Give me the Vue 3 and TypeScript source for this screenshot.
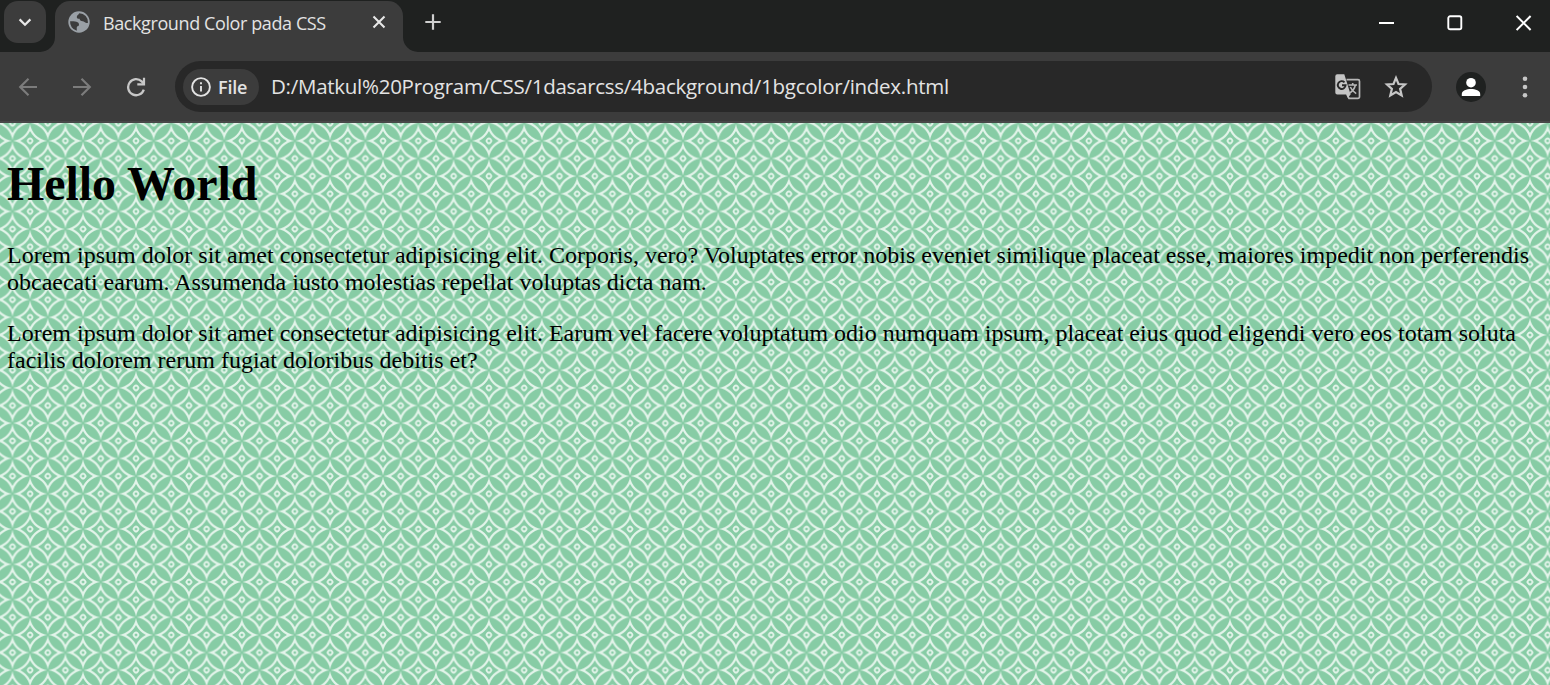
<script setup lang="ts">
const tabTitle = 'Background Color pada CSS'
const url = 'D:/Matkul%20Program/CSS/1dasarcss/4background/1bgcolor/index.html'
const paragraphs: string[][] = [
  [
    'Lorem ipsum dolor sit amet consectetur adipisicing elit. Corporis, vero? Voluptates error nobis eveniet similique placeat esse, maiores impedit non perferendis',
    'obcaecati earum. Assumenda iusto molestias repellat voluptas dicta nam.',
  ],
  [
    'Lorem ipsum dolor sit amet consectetur adipisicing elit. Earum vel facere voluptatum odio numquam ipsum, placeat eius quod eligendi vero eos totam soluta',
    'facilis dolorem rerum fugiat doloribus debitis et?',
  ],
]

// Centres of the concave diamonds in one tile: four corners and the middle.
const tile = 35.29
const centres: [number, number][] = [
  [0, 0], [tile, 0], [0, tile], [tile, tile], [tile / 2, tile / 2],
]

// Four-pointed star whose sides are arcs bending towards the centre.
function star(tip: number, radius: number): string {
  const arc = `A${radius} ${radius} 0 0 0`
  return `M0 ${-tip}${arc} ${tip} 0${arc} 0 ${tip}${arc} ${-tip} 0${arc} 0 ${-tip}Z`
}
const outerStar = star(17, 20.3)
const innerStar = star(9.8, 22.6)
</script>

<template>
  <div class="browser">
    <header class="tabstrip">
      <div class="search-well">
        <button class="tab-search" aria-label="Search tabs">
          <svg width="42" height="42" viewBox="0 0 42 42"><path d="M15.6 18.4 21 23.8 26.4 18.4" fill="none" stroke="#e8e8e8" stroke-width="2.2" /></svg>
        </button>
      </div>
      <div class="tab-well">
        <div class="tab">
          <svg class="globe" width="22" height="22" viewBox="0 0 22 22">
            <circle cx="11" cy="11" r="10.7" fill="#9aa0a6" />
            <path d="M11.3 2.2C10.2 4 8.7 4.4 8.8 6.2c.1 1.3 1.3 1.6 2.8 1.5.3 1.4.7 2 2 2.2 1.6.2 2.7.8 3.6 1.6.9.7 1.8.4 2.8.2A9 9 0 0 0 11.3 2.2Z" fill="#3c3c3c" />
            <path d="M2.1 10.3c2.1.1 4.7 0 6.3.4 1.7.4 2.7 1.5 2.6 3-.1 1.3-1 1.5-1.9 1.8-.6.9-.2 2.4-.3 4.3A9 9 0 0 1 2.1 10.3Z" fill="#3c3c3c" />
          </svg>
          <span class="tab-title">{{ tabTitle }}</span>
          <svg class="tab-close" width="14" height="14" viewBox="0 0 14 14"><path d="M1.5 1.5 12.5 12.5M12.5 1.5 1.5 12.5" stroke="#e8e8e8" stroke-width="2.1" /></svg>
        </div>
      </div>
      <div class="strip-rest">
        <svg class="plus" width="16" height="16" viewBox="0 0 16 16"><path d="M8 .3V15.7M.3 8H15.7" stroke="#cfcfcf" stroke-width="2.2" /></svg>
        <div class="window-controls">
          <svg width="16" height="16" viewBox="0 0 16 16"><path d="M1 8H16" stroke="#fff" stroke-width="2" /></svg>
          <svg width="16" height="16" viewBox="0 0 16 16"><rect x="1.3" y="1.3" width="13" height="13" rx="1.8" fill="none" stroke="#fff" stroke-width="1.9" /></svg>
          <svg width="16" height="16" viewBox="0 0 16 16"><path d="M.6 1 14.6 15M14.6 1 .6 15" stroke="#fff" stroke-width="2" /></svg>
        </div>
      </div>
    </header>

    <nav class="toolbar">
      <svg class="nav-icon" width="20" height="20" viewBox="0 0 20 20"><path d="M19 10H2.5M10.5 1.7 2.2 10 10.5 18.3" fill="none" stroke="#7c7c7c" stroke-width="2.2" /></svg>
      <svg class="nav-icon" width="20" height="20" viewBox="0 0 20 20"><path d="M1 10H17.5M9.5 1.7 17.8 10 9.5 18.3" fill="none" stroke="#7c7c7c" stroke-width="2.2" /></svg>
      <svg class="nav-icon" width="20" height="20" viewBox="0 0 20 20">
        <path d="M17.8 12.6A8 8 0 1 1 15.7 4.4L17.8 6.6" fill="none" stroke="#c7c7c7" stroke-width="2.3" />
        <path d="M18 .8V7.3H11.3" fill="none" stroke="#c7c7c7" stroke-width="2.2" />
      </svg>
      <div class="omnibox">
        <div class="chip">
          <svg width="20" height="20" viewBox="0 0 20 20">
            <circle cx="10" cy="10" r="8.9" fill="none" stroke="#e3e3e3" stroke-width="1.9" />
            <path d="M10 9V14.5M10 5.3V7.3" stroke="#e3e3e3" stroke-width="1.9" />
          </svg>
          <span>File</span>
        </div>
        <span class="url">{{ url }}</span>
        <svg class="translate" width="26" height="26" viewBox="0 0 26 26">
          <path d="M11.5 5.7H23a1.5 1.5 0 0 1 1.5 1.5V22.8a1.5 1.5 0 0 1-1.5 1.5H14L11.8 20" fill="none" stroke="#b8b8b8" stroke-width="1.7" />
          <path d="M2.3 .3H9.3L15.6 20.4 12.8 23.8 11.6 20.4H2.3A2 2 0 0 1 .3 18.4V2.3a2 2 0 0 1 2-2Z" fill="#c4c4c4" />
          <path d="M9.5 8.3A3.9 3.9 0 1 0 10.6 11.3H7" fill="none" stroke="#282828" stroke-width="1.9" />
          <path d="M13.5 11H22M17.7 9V11M20.4 11C19.6 14.4 17.7 17.1 14.8 19M15.3 13C16.4 15.5 18.2 17.8 21.2 19.6" fill="none" stroke="#b8b8b8" stroke-width="1.6" />
        </svg>
        <svg class="star" width="24" height="24" viewBox="0 0 24 24"><path d="M12 2.9 14.5 9 21 9.5 16.1 13.8 17.7 20.5 12 17 6.3 20.5 7.9 13.8 3 9.5 9.5 9Z" fill="none" stroke="#c7c7c7" stroke-width="2.2" /></svg>
      </div>
      <svg class="avatar" width="30" height="30" viewBox="0 0 30 30">
        <circle cx="15" cy="15" r="15" fill="#1f2120" />
        <circle cx="15" cy="10.7" r="4.8" fill="#fff" />
        <path d="M5.8 24V22C5.8 18.8 10.5 17 15 17S24.2 18.8 24.2 22V24Z" fill="#fff" />
      </svg>
      <svg class="menu" width="6" height="22" viewBox="0 0 6 22">
        <g fill="#c7c7c7"><circle cx="3" cy="2.7" r="2.3" /><circle cx="3" cy="11" r="2.3" /><circle cx="3" cy="19.3" r="2.3" /></g>
      </svg>
    </nav>

    <main class="page">
      <svg class="backdrop" width="1550" height="562">
        <defs>
          <pattern id="kawung" x="12.5" y="35.5" :width="tile" :height="tile" patternUnits="userSpaceOnUse">
            <g v-for="([x, y], i) in centres" :key="i" :transform="`translate(${x} ${y})`">
              <path :d="outerStar" fill="#e3f4ea" />
              <path :d="innerStar" fill="#87cca5" />
              <rect x="-2.2" y="-2.2" width="4.4" height="4.4" rx="1.6" transform="rotate(45)" fill="#87cca5" stroke="#e3f4ea" stroke-width="1.8" />
            </g>
          </pattern>
        </defs>
        <rect width="1550" height="562" fill="#87cca5" />
        <rect width="1550" height="562" fill="url(#kawung)" />
      </svg>
      <article class="content">
        <h1>Hello World</h1>
        <p v-for="(lines, i) in paragraphs" :key="i">
          <span v-for="(line, j) in lines" :key="j" class="line">{{ line }}</span>
        </p>
      </article>
    </main>
  </div>
</template>

<style>
body { margin: 0; overflow: hidden; }
</style>

<style scoped>
.browser { width: 1550px; height: 685px; overflow: hidden; display: flex; flex-direction: column; font-family: "Open Sans", "Noto Sans", sans-serif; background: #1f2120; }
.tabstrip { height: 52px; display: flex; background: #3c3c3c; flex: none; }
.search-well { width: 55px; box-sizing: border-box; padding: 1px 0 0 4px; background: #1f2120; border-bottom-right-radius: 15px; }
.tab-search { display: block; width: 42px; height: 42px; padding: 0; border: 0; border-radius: 14px; background: #3c3c3c; }
.tab-search svg { display: block; }
.tab-well { width: 348px; box-sizing: border-box; padding-top: 1px; background: linear-gradient(#1f2120 50%, #3c3c3c 50%); }
.tab { height: 51px; box-sizing: border-box; display: flex; align-items: flex-start; padding: 10px 17px 0 13px; background: #3c3c3c; border-radius: 15px 15px 0 0; }
.globe { flex: none; }
.tab-title { margin-left: 13px; font-size: 18px; line-height: 24px; color: #e3e3e3; white-space: nowrap; letter-spacing: -0.4px; flex: 1; }
.tab-close { margin-top: 4px; flex: none; }
.strip-rest { flex: 1; display: flex; justify-content: space-between; background: #1f2120; border-bottom-left-radius: 15px; padding: 14px 18px 0 22px; }
.window-controls { display: flex; gap: 53px; padding-top: 1px; }
.toolbar { height: 69px; flex: none; display: flex; align-items: center; background: #3c3c3c; border-bottom: 2px solid #484848; padding-left: 18px; }
.nav-icon { flex: none; margin-right: 34px; }
.nav-icon:nth-child(3) { margin-right: 29px; }
.omnibox { width: 1257px; height: 51px; box-sizing: border-box; border-radius: 26px; background: #282828; display: flex; align-items: center; padding: 0 24px 0 8px; flex: none; }
.chip { width: 76px; height: 36px; box-sizing: border-box; padding-left: 7.5px; border-radius: 18px; background: #3c3c3c; display: flex; align-items: center; gap: 7.5px; color: #e3e3e3; font-size: 18px; font-weight: 600; letter-spacing: -0.2px; flex: none; }
.url { margin-left: 12px; padding-bottom: 2px; font-size: 20.5px; letter-spacing: -0.27px; color: #e3e3e3; white-space: nowrap; flex: 1; }
.translate { margin-right: 23px; }
.avatar { margin-left: 24px; }
.menu { margin-left: 36px; }
.page { flex: 1; position: relative; }
.backdrop { position: absolute; inset: 0; display: block; }
.content { position: relative; padding: 33px 7px 0; font-family: "Liberation Serif", "Times New Roman", serif; color: #000; }
h1 { margin: 0; font-size: 48px; line-height: 56px; font-weight: 700; letter-spacing: -0.08px; }
p { margin: 30px 0 0; font-size: 24px; line-height: 27px; }
p + p { margin-top: 24px; }
.line { display: block; white-space: nowrap; }
</style>
